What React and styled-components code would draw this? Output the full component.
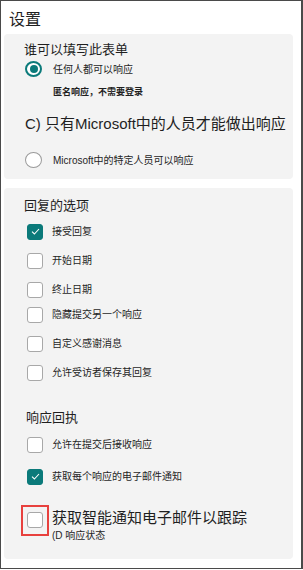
import React from 'react';
import styled, { createGlobalStyle } from 'styled-components';

const GlobalStyle = createGlobalStyle`
  html, body {
    margin: 0;
    padding: 0;
    background: #ffffff;
  }
  body {
    font-family: "Liberation Sans", "Noto Sans CJK SC", sans-serif;
    color: #1f1f1f;
  }
`;

const teal = '#0b7a7a';

const Frame = styled.div`
  box-sizing: border-box;
  width: 303px;
  height: 569px;
  border: 1px solid #4a4a4a;
  border-right-width: 2px;
  padding: 9px 8px 0 3px;
  display: flex;
  flex-direction: column;
`;

const Title = styled.div`
  font-size: 16px;
  line-height: 20px;
  padding-left: 5px;
  margin-bottom: 4px;
`;

const Card = styled.section`
  background: #f3f3f3;
  border-radius: 4px;
  padding: ${({ $top }) => $top}px 0 8px 20px;
  height: ${({ $height }) => $height}px;
  box-sizing: border-box;
  margin-bottom: 9px;
  display: flex;
  flex-direction: column;
`;

const Heading = styled.div`
  font-size: 13px;
  line-height: 16px;
  margin-top: ${({ $gap }) => $gap || 0}px;
  padding-left: ${({ $indent }) => $indent || 0}px;
`;

const Row = styled.div`
  display: flex;
  align-items: ${({ $top }) => ($top ? 'flex-start' : 'center')};
  margin-top: ${({ $gap }) => $gap || 0}px;
  padding-left: ${({ $indent }) => $indent || 0}px;
`;

const Radio = styled.span`
  box-sizing: border-box;
  width: 17px;
  height: 16px;
  border-radius: 50%;
  border: ${({ $checked }) => ($checked ? `2px solid ${teal}` : '1px solid #9a9a9a')};
  background: #ffffff;
  display: flex;
  align-items: center;
  justify-content: center;
  flex-shrink: 0;

  &::after {
    content: '';
    display: ${({ $checked }) => ($checked ? 'block' : 'none')};
    width: 8px;
    height: 8px;
    border-radius: 50%;
    background: ${teal};
  }
`;

const Box = styled.span`
  position: relative;
  box-sizing: border-box;
  width: 16px;
  height: 16px;
  border-radius: 3px;
  border: ${({ $checked }) => ($checked ? `1px solid ${teal}` : '1.5px solid #a8a8a8')};
  background: ${({ $checked }) => ($checked ? teal : '#ffffff')};
  display: flex;
  align-items: center;
  justify-content: center;
  flex-shrink: 0;
  margin-top: ${({ $drop }) => $drop || 0}px;

  &::after {
    content: '';
    display: ${({ $marked }) => ($marked ? 'block' : 'none')};
    position: absolute;
    left: -7px;
    right: -7px;
    top: -8px;
    bottom: -9px;
    border: 2px solid #e8413e;
  }
`;

const Label = styled.span`
  font-size: ${({ $size }) => $size ?? 10}px;
  line-height: ${({ $size }) => ($size ? $size + 4 : 13)}px;
  margin-left: ${({ $offset }) => $offset ?? 9}px;
  white-space: nowrap;
`;

const Note = styled.div`
  font-size: 9px;
  line-height: 12px;
  margin-top: ${({ $gap }) => $gap}px;
  padding-left: 29px;
  font-weight: bold;
`;

const Big = styled.div`
  font-size: 15px;
  line-height: 20px;
  margin-top: ${({ $gap }) => $gap}px;
  padding-left: 1px;
  white-space: nowrap;
`;

const Stack = styled.div`
  display: flex;
  flex-direction: column;
  margin-left: 9px;
`;

const Sub = styled.span`
  font-size: 10px;
  line-height: 13px;
  margin-top: 2px;
`;

const Check = () => (
  <svg width="9" height="7" viewBox="0 0 9 7">
    <path d="M1 3.6 L3.4 6 L8 1" fill="none" stroke="#fff" strokeWidth="1.1" />
  </svg>
);

const CheckRow = ({ gap, checked, children }) => (
  <Row $gap={gap} $indent={3}>
    <Box $checked={checked}>{checked && <Check />}</Box>
    <Label>{children}</Label>
  </Row>
);

const App = () => (
  <>
    <GlobalStyle />
    <Frame>
      <Title>设置</Title>
      <Card $top={8} $height={145}>
        <Heading>谁可以填写此表单</Heading>
        <Row $gap={3} $indent={1}>
          <Radio $checked />
          <Label $offset={11}>任何人都可以响应</Label>
        </Row>
        <Note $gap={9}>匿名响应，不需要登录</Note>
        <Big $gap={16}>C) 只有Microsoft中的人员才能做出响应</Big>
        <Row $gap={18} $indent={1}>
          <Radio />
          <Label $offset={11}>Microsoft中的特定人员可以响应</Label>
        </Row>
      </Card>
      <Card $top={10} $height={372}>
        <Heading>回复的选项</Heading>
        <CheckRow gap={10} checked>接受回复</CheckRow>
        <CheckRow gap={13}>开始日期</CheckRow>
        <CheckRow gap={13}>终止日期</CheckRow>
        <CheckRow gap={9}>隐藏提交另一个响应</CheckRow>
        <CheckRow gap={13}>自定义感谢消息</CheckRow>
        <CheckRow gap={13}>允许受访者保存其回复</CheckRow>
        <Heading $gap={29} $indent={2}>响应回执</Heading>
        <CheckRow gap={11}>允许在提交后接收响应</CheckRow>
        <CheckRow gap={16} checked>获取每个响应的电子邮件通知</CheckRow>
        <Row $gap={23} $indent={3} $top>
          <Box $drop={4} $marked />
          <Stack>
            <Label $size={15} $offset={0}>获取智能通知电子邮件以跟踪</Label>
            <Sub>(D 响应状态</Sub>
          </Stack>
        </Row>
      </Card>
    </Frame>
  </>
);

export default App;
